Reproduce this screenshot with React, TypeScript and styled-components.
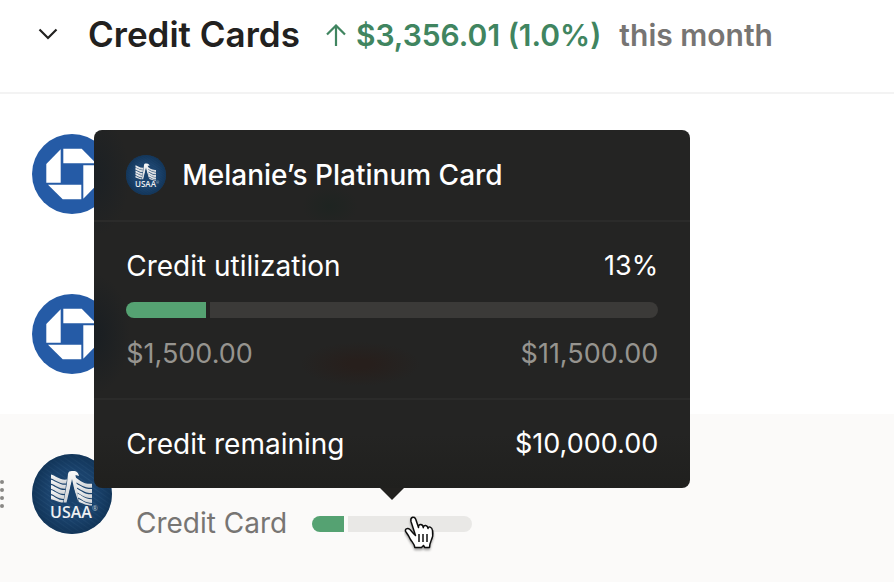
import React from "react";
import styled, { createGlobalStyle } from "styled-components";

const GlobalStyle = createGlobalStyle`
  *, *::before, *::after { box-sizing: border-box; }
  body {
    margin: 0;
    background: #ffffff;
    color: #222120;
    font-family: Inter, "Liberation Sans", sans-serif;
    font-size: 28px;
    line-height: 36px;
    overflow-x: hidden;
  }
`;

const Panel = styled.main`
  display: flex;
  flex-direction: column;
  min-height: 100vh;
  overflow: hidden;
`;

const Header = styled.header`
  display: flex;
  align-items: flex-start;
  height: 94px;
  padding: 12px 32px 0;
  border-bottom: 2px solid #f3f3f3;
  white-space: nowrap;
`;

const Toggle = styled.button`
  display: flex;
  align-items: center;
  justify-content: center;
  width: 32px;
  height: 44px;
  margin-right: 24px;
  padding: 0;
  border: 0;
  background: none;
  color: #222120;
`;

const Title = styled.h1`
  margin: 0 26px 0 0;
  font-size: 35px;
  line-height: 44px;
  font-weight: 600;
`;

const Change = styled.span`
  display: flex;
  align-items: center;
  gap: 10px;
  margin-right: 18px;
  font-size: 30px;
  line-height: 46px;
  font-weight: 600;
  color: #408560;
`;

const Period = styled.span`
  font-size: 30px;
  line-height: 46px;
  font-weight: 600;
  color: #777573;
`;

const List = styled.ul`
  display: flex;
  flex-direction: column;
  flex: 1;
  margin: 0;
  padding: 0;
  list-style: none;
`;

const Row = styled.li<{ $active?: boolean }>`
  display: flex;
  align-items: flex-start;
  gap: 24px;
  min-height: 160px;
  padding: 40px 32px 40px 0;
  flex-grow: ${(p) => (p.$active ? 1 : 0)};
  background: ${(p) => (p.$active ? "#fbfaf9" : "#ffffff")};
`;

const Lead = styled.div`
  display: flex;
  align-items: center;
  gap: 28px;
  height: 80px;
`;

const HandleSlot = styled.span`
  display: flex;
  width: 4px;
`;

const Details = styled.div`
  display: flex;
  align-items: center;
  gap: 25px;
  margin-top: 50px;
  line-height: 38px;
  color: #777573;
  white-space: nowrap;
`;

const MeterAnchor = styled.div`
  position: relative;
  width: 160px;
  margin-top: 2px;
`;

const Meter = styled.div<{ $dark?: boolean }>`
  display: flex;
  gap: 4px;
  height: 16px;
  border-radius: 8px;
  overflow: hidden;

  &::after {
    content: "";
    flex: 1;
    background: ${(p) => (p.$dark ? "#3b3a38" : "#e9e8e6")};
  }
`;

const MeterFill = styled.span<{ $share: number }>`
  width: ${(p) => p.$share}%;
  background: #55a272;
`;

const Tooltip = styled.section`
  position: absolute;
  left: 50%;
  bottom: calc(100% + 28px);
  width: 596px;
  transform: translateX(-50%);
  border-radius: 8px;
  color: #ffffff;
  background:
    radial-gradient(60px 22px at 266px 234px, #271f1c 20%, transparent),
    radial-gradient(28px 20px at 236px 76px, #1e2421, transparent),
    radial-gradient(36px 60px at 0 46px, #1b2024, transparent),
    radial-gradient(36px 60px at 0 204px, #191e22, transparent),
    linear-gradient(#242423 85%, #20201e);

  &::after {
    content: "";
    position: absolute;
    top: 100%;
    left: 50%;
    margin-left: -12px;
    border: 12px solid transparent;
    border-top-color: #22211f;
    border-bottom-width: 0;
  }
`;

const TooltipPart = styled.div`
  display: flex;
  flex-direction: column;
  padding: 26px 32px;

  & + & { border-top: 2px solid #2b2b2a; }
`;

const TooltipTitle = styled.h2`
  display: flex;
  align-items: center;
  gap: 16px;
  height: 38px;
  margin: 0;
  font-size: 28px;
  line-height: 36px;
  font-weight: 500;

  svg { flex: none; }
`;

const Line = styled.div<{ $muted?: boolean }>`
  display: flex;
  justify-content: space-between;
  line-height: 36px;
  color: ${(p) => (p.$muted ? "#96948f" : "#ffffff")};

  ${Meter} + & { margin-top: 18px; }
  & + ${Meter} { margin-top: 18px; }
`;

const Figure = styled.span`
  font-size: 27px;
`;

const Cursor = styled.svg`
  position: absolute;
  left: 92px;
  top: 0;
`;

function ChaseLogo() {
  return (
    <svg width="80" height="80" viewBox="0 0 80 80" role="img" aria-label="Chase">
      <circle cx="40" cy="40" r="40" fill="#255ba6" />
      <g fill="#fff">
        <path d="M31.3 14.7H49.7L64 29.3H31.3Z" />
        <path d="M28.7 15.3V48.7H14.3V30Z" />
        <path d="M16 50.7H49.3V65.3H30.7Z" />
        <path d="M51.3 64.7V31.3H65.7V50Z" />
      </g>
    </svg>
  );
}

function UsaaLogo({ size, id }: { size: number; id: string }) {
  return (
    <svg width={size} height={size} viewBox="0 0 80 80" role="img" aria-label="USAA">
      <defs>
        <pattern id={id} width="4" height="4" patternUnits="userSpaceOnUse" patternTransform="rotate(35)">
          <rect width="4" height="4" fill="#1a426c" />
          <rect width="4" height="1" fill="#234c75" />
        </pattern>
        <radialGradient id={id + "-shade"}>
          <stop offset="0.6" stopColor="#0c2c4c" stopOpacity="0" />
          <stop offset="1" stopColor="#0c2c4c" stopOpacity="0.6" />
        </radialGradient>
        <linearGradient id={id + "-metal"} x2="0" y2="1">
          <stop stopColor="#fafafa" />
          <stop offset="1" stopColor="#cfd2d5" />
        </linearGradient>
      </defs>
      <circle cx="40" cy="40" r="40" fill={`url(#${id})`} />
      <circle cx="40" cy="40" r="40" fill={`url(#${id}-shade)`} />
      <g fill={`url(#${id}-metal)`}>
        <path d="M19 20.500C24 22 28 26.500 35 25.500L34.200 29.500C27 30 24 26 19 24.500Z" />
        <path d="M19 25.700C24 27.200 28 31.200 34 30.700L33.400 34.700C27 35 24 31 19 29.700Z" />
        <path d="M19 30.900C24 32.400 27 36.400 33.200 35.900L32.600 39.900C26 40 24 36.200 19 34.900Z" />
        <path d="M19 36.100C24 37.600 27 41.600 32.400 41.100L31.800 45.100C26 45 23 41.400 19 40.100Z" />
        <path d="M19 41.300C23 42.600 26 46.300 31.600 46.300L30.500 48.800C26 48 23 46 19 45.200Z" />
        <path d="M42 22C47 26 51 30.500 60 29.800V33.800C52 34 48 30 43 28Z" />
        <path d="M43.200 29.200C48 31 52 35.500 60 35V39C52 39 49 35 44 33.200Z" />
        <path d="M44.200 34.400C49 36.200 52 40.700 60 40.200V44.200C52 44 49 40.200 45 38.400Z" />
        <path d="M45.200 39.600C50 41.400 53 45.500 60 45.200V49C53 49 50 45.400 46 43.600Z" />
        <path d="M46.200 44.800C50 46.400 54 50 60 50V51.500C54 51.500 50 49 47 48Z" />
        <path d="M36 20C36.500 17 38.500 16.800 41 17C45 17 46.500 19 47 22L43.500 21L44.500 29L46.500 48L39.500 28L34.500 48.500H31.500L35 29Z" />
      </g>
      <path d="M40 25L45 48H35.500Z" fill="#1a426c" />
      <text x="39" y="64" textAnchor="middle" fill="#eef0f2" fontFamily="Open Sans, sans-serif" fontWeight="600" fontSize="16">USAA</text>
      <text x="60" y="57" fill="#b5c2cf" fontFamily="Open Sans, sans-serif" fontSize="7">®</text>
    </svg>
  );
}

function DragHandle() {
  return (
    <svg width="4" height="28" viewBox="0 0 4 28" fill="#8a8886" aria-hidden="true">
      <circle cx="2" cy="2" r="2" />
      <circle cx="2" cy="10" r="2" />
      <circle cx="2" cy="18" r="2" />
      <circle cx="2" cy="26" r="2" />
    </svg>
  );
}

function HandCursor() {
  return (
    <Cursor width="36" height="40" viewBox="0 0 36 40" aria-hidden="true">
      <defs>
        <filter id="cursor-shadow" x="-20%" y="-20%" width="150%" height="150%">
          <feDropShadow dx="0" dy="2" stdDeviation="1" floodOpacity="0.35" />
        </filter>
      </defs>
      <path
        d="M11.500 19.500L7 5.500C6 1 10.500 -0.500 11.800 3.500L14.500 11.500C14 7.500 19 7.500 19.300 11.800C19.500 8.200 23.700 8.800 24 12.500C24.500 9.800 28 10.800 28.500 14.500C29.500 19 28.500 22 27 25C26 27 25.800 28 25.500 31.500H20.800L19.500 29.500L17.500 31.500H10.800C10.500 28 8.500 26.500 6.500 23.500C5 20.500 3.500 18 2 16C0 13 3.500 11.500 6 13.500L9 17Z"
        fill="#fff"
        stroke="#111"
        strokeWidth="1.500"
        strokeLinejoin="round"
        filter="url(#cursor-shadow)"
      />
      <path d="M15 18V26M19 18V26M23 18V26" stroke="#111" strokeWidth="1.500" />
    </Cursor>
  );
}

export default function App() {
  return (
    <>
      <GlobalStyle />
      <Panel>
        <Header>
          <Toggle aria-label="Collapse Credit Cards" aria-expanded="true">
            <svg width="20" height="12" viewBox="0 0 20 12" fill="none" stroke="currentColor" strokeWidth="2.200" aria-hidden="true">
              <path d="M1.500 1.500L10 10L18.500 1.500" />
            </svg>
          </Toggle>
          <Title>Credit Cards</Title>
          <Change>
            <svg width="20" height="22" viewBox="0 0 20 22" fill="none" stroke="currentColor" strokeWidth="2.200" aria-hidden="true">
              <path d="M10 22V2M1 10.500L10 1.500L19 10.500" />
            </svg>
            $3,356.01 (1.0%)
          </Change>
          <Period>this month</Period>
        </Header>
        <List>
          <Row>
            <Lead><HandleSlot /><ChaseLogo /></Lead>
          </Row>
          <Row>
            <Lead><HandleSlot /><ChaseLogo /></Lead>
          </Row>
          <Row $active>
            <Lead><HandleSlot><DragHandle /></HandleSlot><UsaaLogo size={80} id="usaa-row" /></Lead>
            <Details>
              <span>Credit Card</span>
              <MeterAnchor>
                <Meter><MeterFill $share={20} /></Meter>
                <Tooltip role="tooltip">
                  <TooltipPart>
                    <TooltipTitle><UsaaLogo size={40} id="usaa-tip" />Melanie’s Platinum Card</TooltipTitle>
                  </TooltipPart>
                  <TooltipPart>
                    <Line><span>Credit utilization</span><Figure>13%</Figure></Line>
                    <Meter $dark><MeterFill $share={15} /></Meter>
                    <Line $muted><Figure>$1,500.00</Figure><Figure>$11,500.00</Figure></Line>
                  </TooltipPart>
                  <TooltipPart>
                    <Line><span>Credit remaining</span><Figure>$10,000.00</Figure></Line>
                  </TooltipPart>
                </Tooltip>
                <HandCursor />
              </MeterAnchor>
            </Details>
          </Row>
        </List>
      </Panel>
    </>
  );
}
